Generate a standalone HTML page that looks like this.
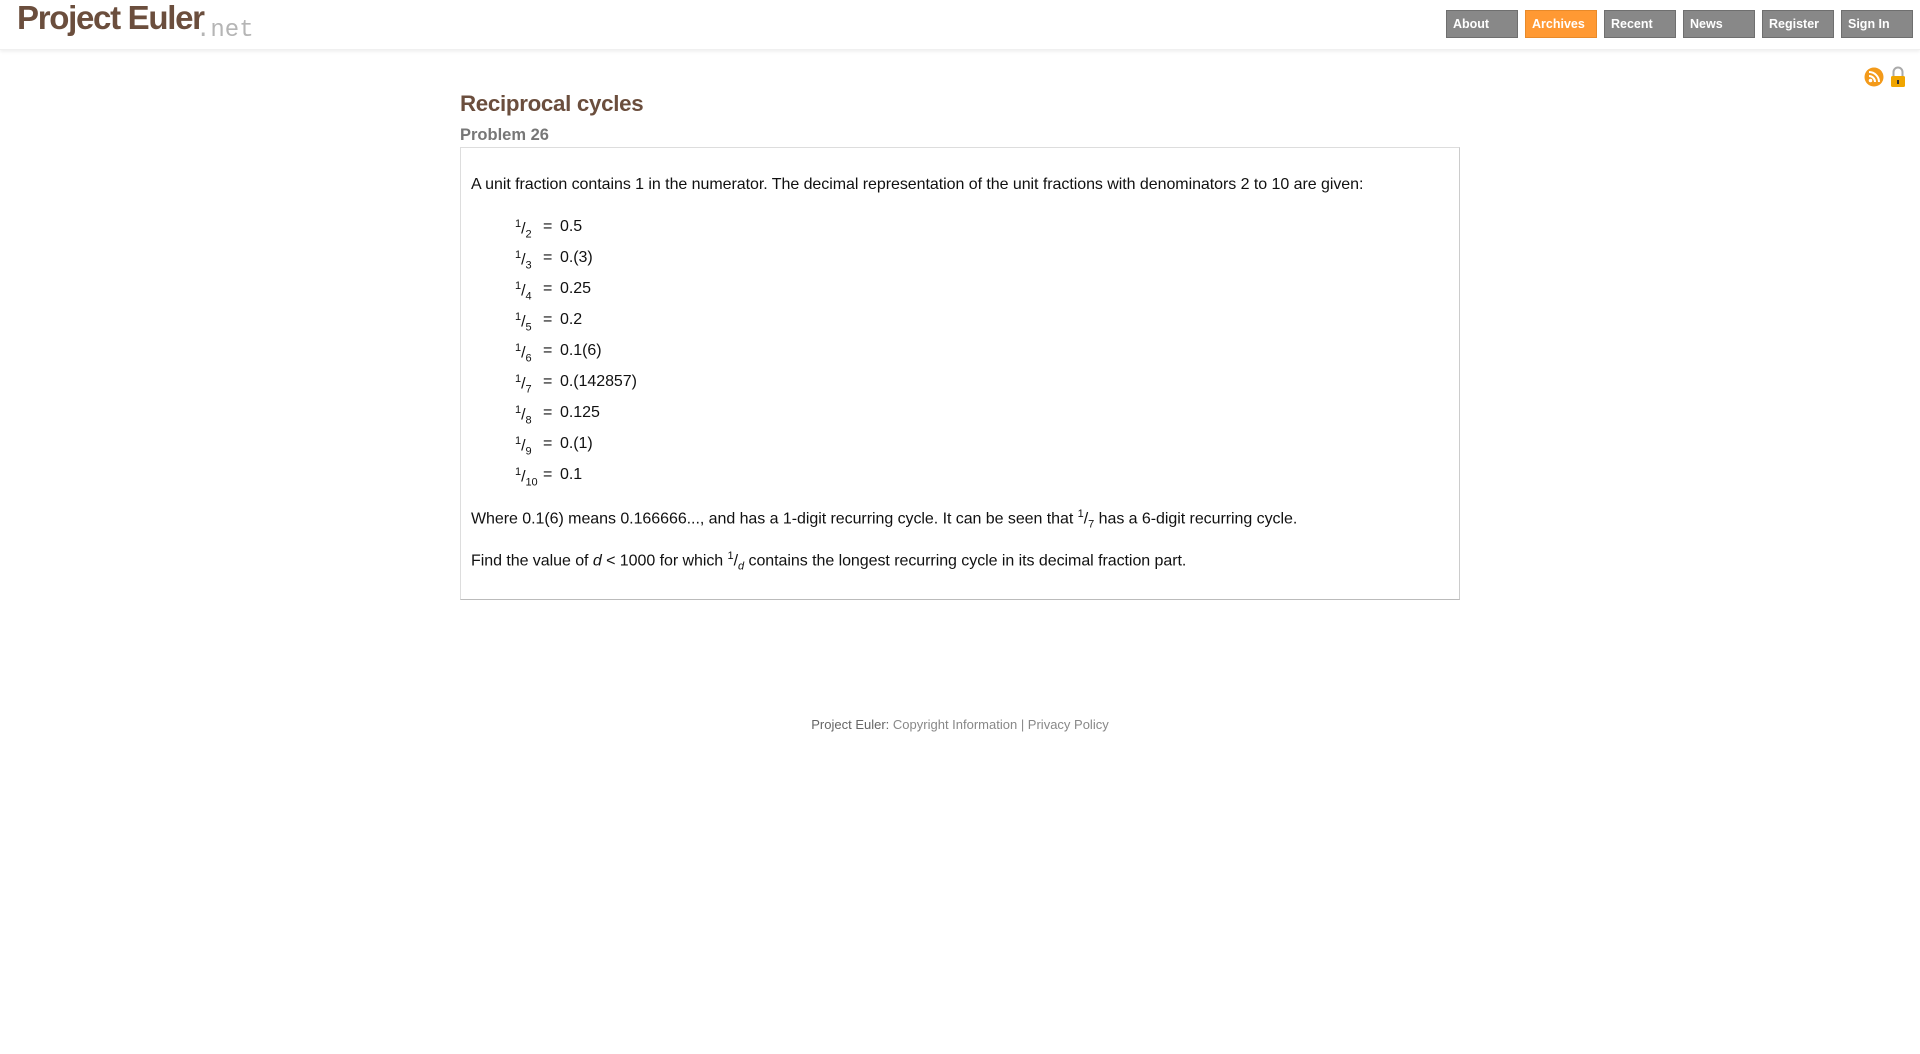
<!DOCTYPE html>
<html><head><meta charset="utf-8"><style>
*{margin:0;padding:0;box-sizing:border-box}
body{width:1920px;height:1054px;background:#fff;font-family:"Liberation Sans",Arial,sans-serif;position:relative;overflow:hidden}
#hdr{position:absolute;left:0;top:0;width:1920px;height:50px;box-shadow:0 2px 3px rgba(0,0,0,0.06);border-bottom:1px solid #f0f0f0}
#logo{position:absolute;left:17px;top:-1px;font-size:33px;font-weight:bold;color:#6b4e3d;letter-spacing:-1.3px}
#net{position:absolute;left:196px;top:17px;font-family:"Liberation Mono",monospace;font-size:24px;color:#b5b5b5}
.btn{position:absolute;top:10px;width:72px;height:28px;background:#888;border:1px solid #6f6f6f;color:#fff;font-weight:bold;font-size:12.5px;padding:6px 0 0 6px}
.btn.on{background:#ff9933;border-color:#e88a2a}
h2{position:absolute;left:460px;top:91px;font-size:22.3px;color:#6b4e3d;letter-spacing:-0.3px}
h3{position:absolute;left:460px;top:126px;font-size:16.5px;color:#777}
#box{position:absolute;left:460px;top:147px;width:1000px;height:453px;border:1px solid #ddd;border-bottom-color:#bbb;border-right-color:#ccc;font-size:16px;letter-spacing:-0.05px;color:#111}
.p{position:absolute;left:10px;white-space:nowrap}
.r{position:absolute;left:54px;white-space:nowrap}
.r .e{position:absolute;left:28px}.r .v{position:absolute;left:45px}
sup,sub{font-size:11px}
#foot{position:absolute;top:717px;left:0;width:1920px;text-align:center;font-size:13px;color:#666}
#foot span{color:#888}
</style></head><body>
<div id="hdr"><div id="logo">Project Euler</div><div id="net">.net</div>
<div class="btn" style="left:1446px">About</div>
<div class="btn on" style="left:1525px">Archives</div>
<div class="btn" style="left:1604px">Recent</div>
<div class="btn" style="left:1683px">News</div>
<div class="btn" style="left:1762px">Register</div>
<div class="btn" style="left:1841px">Sign In</div>
</div>
<svg style="position:absolute;left:1864px;top:67px" width="20" height="20"><circle cx="10" cy="10" r="9.5" fill="#f39a1a"/><circle cx="6.5" cy="13.5" r="1.8" fill="#fff"/><path d="M5 9a6 6 0 0 1 6 6M5 5a10 10 0 0 1 10 10" stroke="#fff" stroke-width="2" fill="none"/></svg>
<svg style="position:absolute;left:1890px;top:66px" width="16" height="22"><path d="M3.5 10V6a4.5 4.5 0 0 1 9 0v4" stroke="#aaa" stroke-width="2" fill="none"/><rect x="1" y="10" width="14" height="11" rx="1.5" fill="#f0a500"/><rect x="7" y="14" width="2" height="4" fill="#333"/></svg>
<h2>Reciprocal cycles</h2>
<h3>Problem 26</h3>
<div id="box">
<div class="p" style="top:28px">A unit fraction contains 1 in the numerator. The decimal representation of the unit fractions with denominators 2 to 10 are given:</div>
<div class="r" style="top:70px"><sup>1</sup>/<sub>2</sub><span class="e">=</span><span class="v">0.5</span></div>
<div class="r" style="top:101px"><sup>1</sup>/<sub>3</sub><span class="e">=</span><span class="v">0.(3)</span></div>
<div class="r" style="top:132px"><sup>1</sup>/<sub>4</sub><span class="e">=</span><span class="v">0.25</span></div>
<div class="r" style="top:163px"><sup>1</sup>/<sub>5</sub><span class="e">=</span><span class="v">0.2</span></div>
<div class="r" style="top:194px"><sup>1</sup>/<sub>6</sub><span class="e">=</span><span class="v">0.1(6)</span></div>
<div class="r" style="top:225px"><sup>1</sup>/<sub>7</sub><span class="e">=</span><span class="v">0.(142857)</span></div>
<div class="r" style="top:256px"><sup>1</sup>/<sub>8</sub><span class="e">=</span><span class="v">0.125</span></div>
<div class="r" style="top:287px"><sup>1</sup>/<sub>9</sub><span class="e">=</span><span class="v">0.(1)</span></div>
<div class="r" style="top:318px"><sup>1</sup>/<sub>10</sub><span class="e">=</span><span class="v">0.1</span></div>
<div class="p" style="top:360px">Where 0.1(6) means 0.166666..., and has a 1-digit recurring cycle. It can be seen that <sup>1</sup>/<sub>7</sub> has a 6-digit recurring cycle.</div>
<div class="p" style="top:402px">Find the value of <i>d</i> &lt; 1000 for which <sup>1</sup>/<sub><i>d</i></sub> contains the longest recurring cycle in its decimal fraction part.</div>
</div>
<div id="foot">Project Euler: <span>Copyright Information | Privacy Policy</span></div>
</body></html>
